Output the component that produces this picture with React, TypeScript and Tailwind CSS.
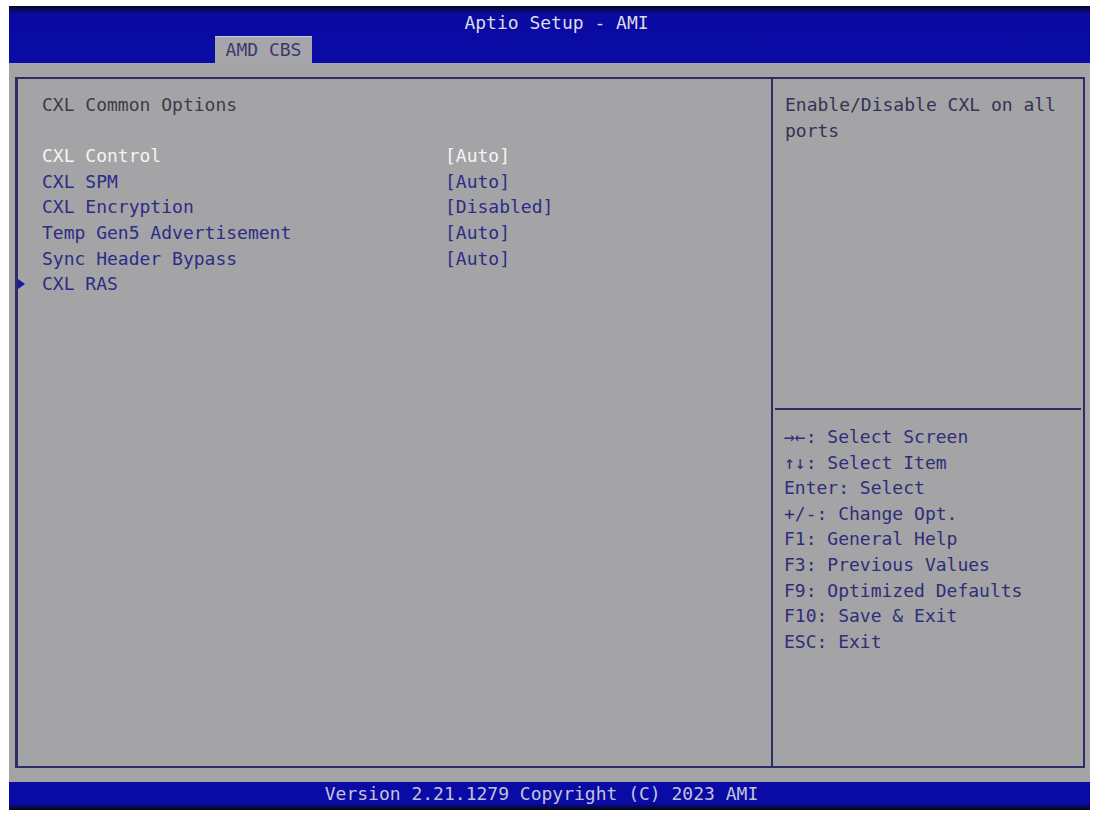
import React from "react"

const items = [
  { label: "CXL Control", value: "[Auto]", active: true },
  { label: "CXL SPM", value: "[Auto]" },
  { label: "CXL Encryption", value: "[Disabled]" },
  { label: "Temp Gen5 Advertisement", value: "[Auto]" },
  { label: "Sync Header Bypass", value: "[Auto]" },
]

const helpKeys = [
  "→←: Select Screen",
  "↑↓: Select Item",
  "Enter: Select",
  "+/-: Change Opt.",
  "F1: General Help",
  "F3: Previous Values",
  "F9: Optimized Defaults",
  "F10: Save & Exit",
  "ESC: Exit",
]

const mono = "font-['DejaVu_Sans_Mono','Liberation_Mono',monospace] text-[18px] leading-[25.6px]"

export default function App() {
  return (
    <div className={`w-[1095px] h-[818px] bg-white pt-[6px] pl-[9px] pr-[5px] pb-[8px] flex flex-col ${mono}`}>
      {/* title bar */}
      <div className="h-[57px] shrink-0 flex flex-col bg-gradient-to-b from-[#05052a] via-[#0a0aa2] via-15% to-[#0a0aa6]">
        <div className="h-[32px] pt-[3px] flex items-center justify-center pl-[14px] text-[#dcdce6]">
          Aptio Setup - AMI
        </div>
        <div className="flex-1 flex pl-[206px]">
          <div className="w-[97px] bg-[#a6a6aa] flex items-center justify-center text-[#3a3a6a] border-t border-[#c8c8d8]">
            AMD CBS
          </div>
        </div>
      </div>

      {/* body */}
      <div className="flex-1 bg-[#a4a4a6] pl-[6px] pr-[5px] pt-[14px] pb-[14px] flex">
        <div className="flex-1 flex border-2 border-[#2e2e66] border-l-[3px]">
          {/* left panel */}
          <div className="w-[755px] shrink-0 border-r-2 border-[#2e2e66] pt-[13px] pl-[24px] flex flex-col">
            <div className="text-[#3c3c48] flex">CXL Common Options</div>
            <div className="h-[25.6px]" />
            {items.map((it) => (
              <div key={it.label} className="flex">
                <span className={`w-[403px] ${it.active ? "text-[#f4f4f4]" : "text-[#2c2c86]"}`}>{it.label}</span>
                <span className={it.active ? "text-[#f4f4f4]" : "text-[#2c2c86]"}>{it.value}</span>
              </div>
            ))}
            <div className="flex items-center -ml-[24px]">
              <svg width="24" height="12" viewBox="0 0 24 12" className="shrink-0">
                <path d="M0 1 L7 6 L0 11 Z" fill="#1a1aa0" />
              </svg>
              <span className="text-[#2c2c86]">CXL RAS</span>
            </div>
          </div>

          {/* right panel */}
          <div className="flex-1 flex flex-col">
            <div className="h-[331px] pt-[13px] pl-[10px] text-[#333355] border-b-2 border-[#2e2e66] mx-[2px]">
              <div>Enable/Disable CXL on all</div>
              <div>ports</div>
            </div>
            <div className="pt-[14px] pl-[11px] flex flex-col">
              {helpKeys.map((k) => (
                <div key={k} className="text-[#2e2e7a]">{k}</div>
              ))}
            </div>
          </div>
        </div>
      </div>

      {/* footer */}
      <div className="h-[28px] shrink-0 flex flex-col">
        <div className="h-[23px] bg-[#0a0aa6] flex items-center justify-center pr-[16px] text-[#c4c4d8]">
          Version 2.21.1279 Copyright (C) 2023 AMI
        </div>
        <div className="flex-1 bg-gradient-to-b from-[#0a0a70] to-[#050510]" />
      </div>
    </div>
  )
}
